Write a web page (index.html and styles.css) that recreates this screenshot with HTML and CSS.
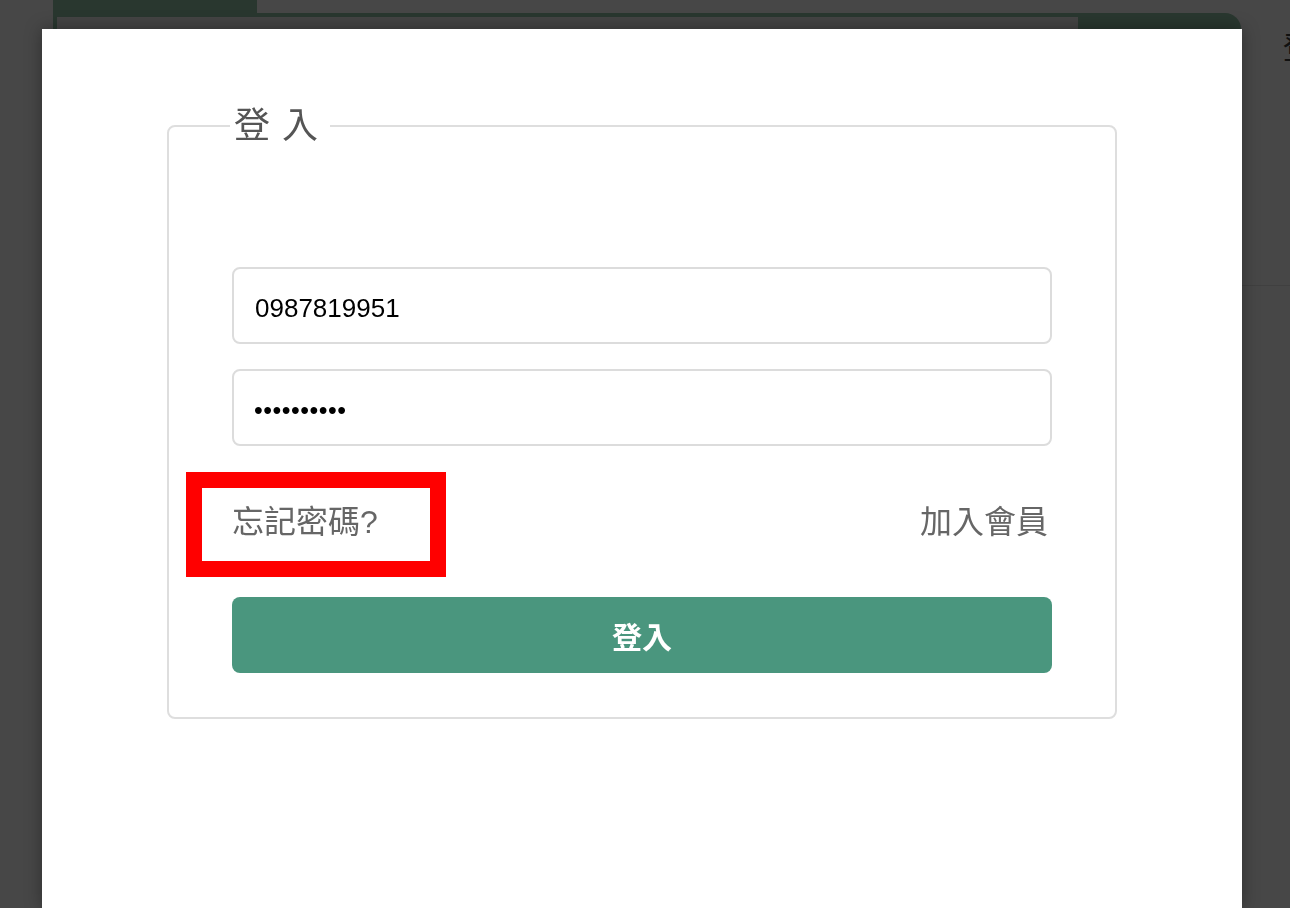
FILE: index.html
```html
<!DOCTYPE html>
<html>
<head>
    <meta charset="UTF-8">
    <title>會員登入</title>
    <link rel="stylesheet" href="styles.css">
</head>
<body>
    <div class="page">
        <div class="page-header">
            <div class="brand-area">
                <div class="brand-tab"></div>
                <div class="brand-panel">
                    <div class="brand-inner"></div>
                </div>
            </div>
            <div class="page-nav">登入</div>
        </div>
    </div>

    <div class="modal">
        <fieldset class="login-box">
            <legend>登入</legend>
            <form id="loginForm">
                <input type="text" class="field" name="phone" value="0987819951">
                <input type="password" class="field" name="password" value="0987819951">
                <div class="login-links">
                    <a href="#" class="forgot">忘記密碼?</a>
                    <a href="#" class="join">加入會員</a>
                </div>
                <input type="submit" class="login-btn" value="登入">
            </form>
        </fieldset>
        <div class="mark"></div>
    </div>
</body>
</html>
```

FILE: styles.css
```css
body {
    margin: 0;
    padding: 0;
    background-color: #474747;
    font-family: "Liberation Sans", "Noto Sans CJK TC", sans-serif;
    height: 908px;
    overflow: hidden;
}

.page-header {
    display: flex;
}

.brand-area {
    flex-shrink: 0;
    margin-left: 53px;
    width: 1188px;
}

.brand-tab {
    width: 204px;
    height: 13px;
    background-color: #29372f;
}

.brand-panel {
    height: 60px;
    background-color: #29372f;
    border-radius: 0 16px 0 0;
    padding: 4px 0 0 4px;
}

.brand-inner {
    width: 1021px;
    height: 56px;
    background-color: #444444;
}

.page-nav {
    flex: 1;
    height: 286px;
    padding: 28px 0 0 42px;
    box-sizing: border-box;
    border-bottom: 1px solid #404040;
    font-size: 30px;
    line-height: 40px;
    color: #111;
    white-space: nowrap;
    overflow: hidden;
}

.modal {
    position: fixed;
    left: 42px;
    top: 29px;
    width: 1200px;
    height: 879px;
    background-color: white;
    box-shadow: 0 0 16px rgba(0, 0, 0, 0.35);
}

.login-box {
    margin: 77px 0 0 125px;
    width: 950px;
    box-sizing: border-box;
    border: 2px solid #dedede;
    border-radius: 8px;
    padding: 121px 63px 44px 63px;
}

.login-box legend {
    margin-left: -2px;
    padding: 0 0 0 4px;
    font-size: 36px;
    line-height: 40px;
    letter-spacing: 12px;
    color: #555;
}

.field {
    display: block;
    width: 100%;
    height: 77px;
    box-sizing: border-box;
    margin: 0 0 25px 0;
    padding: 5px 21px 0 21px;
    border: 2px solid #dcdcdc;
    border-radius: 8px;
    font-family: "Liberation Sans", sans-serif;
    font-size: 26px;
    color: #000;
    outline: none;
}

.field[type="password"] {
    margin-bottom: 0;
    padding-left: 20px;
    font-size: 25px;
    letter-spacing: 0.5px;
}

.login-links {
    display: flex;
    justify-content: space-between;
    align-items: center;
    height: 151px;
}

.login-links a {
    font-size: 32px;
    line-height: 32px;
    color: #666;
    text-decoration: none;
}

.login-links .join {
    margin-right: 4px;
}

.login-btn {
    display: block;
    width: 100%;
    height: 76px;
    border: none;
    border-radius: 8px;
    background-color: #4a967e;
    color: white;
    font-family: "Liberation Sans", "Noto Sans CJK TC", sans-serif;
    font-size: 30px;
    font-weight: bold;
    cursor: pointer;
}

.mark {
    position: absolute;
    left: 144px;
    top: 443px;
    width: 260px;
    height: 105px;
    box-sizing: border-box;
    border: 16px solid #ff0000;
}
```
